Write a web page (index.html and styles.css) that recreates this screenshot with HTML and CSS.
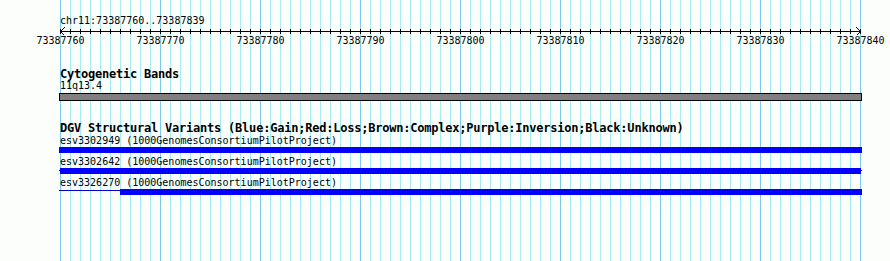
FILE: index.html
```html
<!DOCTYPE html>
<html lang="en">
<head>
<meta charset="utf-8">
<title>GBrowse details</title>
<link rel="stylesheet" href="styles.css">
</head>
<body>
<div class="panel">
  <div class="tracks">
    <div class="ruler-title">chr11:73387760..73387839</div>
    <svg class="ruler" width="801" height="7" viewBox="0 0 801 7" aria-hidden="true">
      <defs>
        <pattern id="tick" width="10" height="5" patternUnits="userSpaceOnUse">
          <rect x="0" y="0" width="1" height="5" fill="#000"/>
        </pattern>
      </defs>
      <rect x="0" y="4" width="801" height="1" fill="#000"/>
      <rect x="0" y="2" width="801" height="5" fill="url(#tick)"/>
      <path d="M4.5 0.5 L0.5 4.5 L4.5 8.5" fill="none" stroke="#000" stroke-width="1"/>
      <path d="M796.5 0.5 L800.5 4.5 L796.5 8.5" fill="none" stroke="#000" stroke-width="1"/>
    </svg>
    <div class="ruler-labels">
      <span class="tick-label"><span>73387760</span></span>
      <span class="tick-label"><span>73387770</span></span>
      <span class="tick-label"><span>73387780</span></span>
      <span class="tick-label"><span>73387790</span></span>
      <span class="tick-label"><span>73387800</span></span>
      <span class="tick-label"><span>73387810</span></span>
      <span class="tick-label"><span>73387820</span></span>
      <span class="tick-label"><span>73387830</span></span>
      <span class="tick-label"><span>73387840</span></span>
    </div>

    <section class="track track-cyto">
      <h2 class="track-title">Cytogenetic Bands</h2>
      <div class="feature-label label-cyto">11q13.4</div>
      <div class="band"></div>
    </section>

    <section class="track track-dgv">
      <h2 class="track-title">DGV Structural Variants (Blue:Gain;Red:Loss;Brown:Complex;Purple:Inversion;Black:Unknown)</h2>
      <div class="feature">
        <div class="feature-label">esv3302949 (1000GenomesConsortiumPilotProject)</div>
        <div class="bar"><div class="seg-thick"></div></div>
      </div>
      <div class="feature">
        <div class="feature-label">esv3302642 (1000GenomesConsortiumPilotProject)</div>
        <div class="bar"><div class="seg-thin seg-cap"></div><div class="seg-thick"></div><div class="seg-thin seg-cap"></div></div>
      </div>
      <div class="feature">
        <div class="feature-label">esv3326270 (1000GenomesConsortiumPilotProject)</div>
        <div class="bar"><div class="seg-thin seg-lead"></div><div class="seg-thick"></div></div>
      </div>
    </section>
  </div>
</div>
</body>
</html>
```

FILE: styles.css
```css
html, body {
  margin: 0;
  padding: 0;
  background: #fcfefc;
}

.panel {
  width: 890px;
  height: 261px;
  padding-left: 60px;
  box-sizing: border-box;
  background: #fcfefc;
  overflow: hidden;
  color: #000;
  font-family: "DejaVu Sans Mono", "Liberation Mono", monospace;
}

.tracks {
  width: 801px;
  height: 261px;
  padding-top: 14px;
  box-sizing: border-box;
  background-image:
    linear-gradient(to right, #7ccbec 1px, transparent 1px),
    linear-gradient(to right, #a6ecf2 1px, transparent 1px);
  background-size: 100px 100%, 10px 100%;
  background-repeat: repeat-x;
}

.ruler-title {
  font-size: 10px;
  line-height: 13px;
  height: 13px;
  white-space: nowrap;
}

.ruler {
  display: block;
  overflow: visible;
  shape-rendering: crispEdges;
}

.ruler-labels {
  display: flex;
  justify-content: space-between;
  width: 801px;
  height: 13px;
  font-size: 10px;
  line-height: 13px;
}

.tick-label {
  width: 1px;
  display: flex;
  justify-content: center;
  white-space: nowrap;
}

.track-cyto {
  margin-top: 21px;
}

.track-dgv {
  margin-top: 21px;
}

.track-title {
  margin: 0;
  font-size: 12px;
  font-weight: bold;
  letter-spacing: -0.22px;
  line-height: 13px;
  height: 13px;
  white-space: nowrap;
}

.feature-label {
  font-size: 10px;
  line-height: 12px;
  height: 12px;
  white-space: nowrap;
}

.label-cyto {
  margin-top: -1px;
}

.band {
  margin-top: 1px;
  margin-left: -1px;
  width: 803px;
  height: 8px;
  box-sizing: border-box;
  border: 1px solid #000;
  background: #808080;
}

.feature + .feature {
  margin-top: 3px;
}

.bar {
  display: flex;
  align-items: flex-start;
  margin-left: -1px;
  width: 803px;
  height: 6px;
}

.seg-thick {
  flex: 1;
  height: 6px;
  background: #0000ff;
}

.seg-thin {
  height: 1px;
  background: #0000cc;
}

.seg-cap {
  width: 1px;
  margin-top: 2px;
}

.seg-lead {
  width: 61px;
  margin-top: 1px;
}
```
